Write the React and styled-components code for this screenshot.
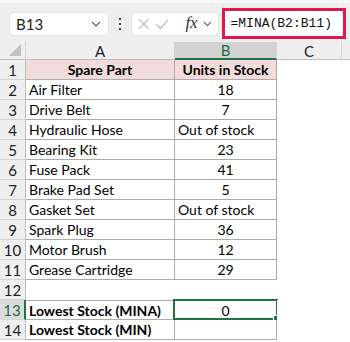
import React from 'react';
import styled, { createGlobalStyle } from 'styled-components';

const GlobalStyle = createGlobalStyle`
  body {
    margin: 0;
    background: #fff;
    font-family: "Lato", "Liberation Sans", sans-serif;
  }
`;

const rows = [
  ['Spare Part', 'Units in Stock'],
  ['Air Filter', '18'],
  ['Drive Belt', '7'],
  ['Hydraulic Hose', 'Out of stock'],
  ['Bearing Kit', '23'],
  ['Fuse Pack', '41'],
  ['Brake Pad Set', '5'],
  ['Gasket Set', 'Out of stock'],
  ['Spark Plug', '36'],
  ['Motor Brush', '12'],
  ['Grease Cartridge', '29'],
  null,
  ['Lowest Stock (MINA)', '0'],
  ['Lowest Stock (MIN)', ''],
];

function App() {
  return (
    <>
      <GlobalStyle />
      <Page>
        <Toolbar>
          <NameBox>
            <span>B13</span>
            <Chevron />
          </NameBox>
          <Dots>
            <i /><i /><i />
          </Dots>
          <FxGroup>
            <svg width="13" height="12" viewBox="0 0 13 12">
              <path d="M1 0.5 L12 11.5 M12 0.5 L1 11.5" stroke="#b3b3b3" strokeWidth="1.3" fill="none" />
            </svg>
            <svg width="14" height="11" viewBox="0 0 14 11">
              <path d="M0.5 5.5 L5 10 L13.5 0.5" stroke="#b3b3b3" strokeWidth="1.3" fill="none" />
            </svg>
            <Fx>fx</Fx>
            <Chevron />
          </FxGroup>
          <FormulaBox>=MINA(B2:B11)</FormulaBox>
        </Toolbar>

        <Sheet>
          <Corner><Triangle /></Corner>
          <ColHead>A</ColHead>
          <ColHead $active>B</ColHead>
          <ColHead>C</ColHead>
          <ColHead $last />

          {rows.map((r, i) => {
            const n = i + 1;
            const active = n === 13;
            if (!r) {
              return (
                <React.Fragment key={n}>
                  <RowHead>{n}</RowHead>
                  <Cell />
                  <Cell />
                  <Cell />
                  <Cell />
                </React.Fragment>
              );
            }
            const isNum = /^\d+$/.test(r[1]);
            const header = n === 1;
            const bold = header || n >= 13;
            return (
              <React.Fragment key={n}>
                <RowHead $active={active}>{n}</RowHead>
                <Cell $border $top={n === 13} $header={header} $bold={bold} $center={header}>
                  {r[0]}
                </Cell>
                <Cell $border $top={n === 13} $header={header} $bold={header} $center={header || isNum}>
                  {r[1]}
                  {active && (
                    <Selection>
                      <Handle />
                    </Selection>
                  )}
                </Cell>
                <Cell />
                <Cell />
              </React.Fragment>
            );
          })}
        </Sheet>
      </Page>
    </>
  );
}

function Chevron() {
  return (
    <svg width="10" height="6" viewBox="0 0 10 6">
      <path d="M1 0.8 L5 4.8 L9 0.8" stroke="#555" strokeWidth="1.2" fill="none" />
    </svg>
  );
}

export default App;

const Page = styled.div`
  width: 350px;
  height: 342px;
  overflow: hidden;
  background: #fff;
`;

const Toolbar = styled.div`
  height: 39px;
  display: flex;
  align-items: center;
  background: #efefef;
  border-top: 3px solid #f6f6f6;
  padding: 0 4px 0 9px;
  box-sizing: content-box;
`;

const NameBox = styled.div`
  width: 100px;
  height: 24px;
  box-sizing: border-box;
  margin-top: 3px;
  background: #fff;
  border: 1px solid #e3e3e3;
  border-radius: 5px;
  display: flex;
  align-items: center;
  justify-content: space-between;
  padding: 0 7px 0 6px;
  font-size: 15px;
  color: #222;
`;

const Dots = styled.div`
  width: 22px;
  margin-top: 3px;
  display: flex;
  flex-direction: column;
  align-items: center;
  gap: 3px;

  i {
    display: block;
    width: 2px;
    height: 2px;
    background: #444;
  }
`;

const FxGroup = styled.div`
  width: 88px;
  height: 24px;
  box-sizing: border-box;
  margin-top: 3px;
  background: #fff;
  border: 1px solid #e6e6e6;
  border-radius: 5px;
  display: flex;
  align-items: center;
  padding: 0 6px 0 6px;
  gap: 7px;
`;

const Fx = styled.span`
  font-family: "Liberation Serif", serif;
  font-style: italic;
  font-size: 17px;
  color: #333;
  margin-left: 10px;
  margin-right: -2px;
  margin-top: -2px;
`;

const FormulaBox = styled.div`
  margin-left: 3px;
  margin-top: 1px;
  width: 125px;
  height: 31px;
  box-sizing: border-box;
  border: 3px solid #e3174b;
  background: #fff;
  display: flex;
  align-items: center;
  padding-left: 6px;
  font-family: "Liberation Mono", monospace;
  font-size: 13px;
  color: #111;
  white-space: nowrap;
  overflow: hidden;
`;

const Sheet = styled.div`
  display: grid;
  grid-template-columns: 26px 149px 102px 65px 1fr;
  grid-template-rows: 18px repeat(14, 20px);
  font-size: 14px;
  color: #000;
`;

const Corner = styled.div`
  position: relative;
  background: #efefef;
  border-right: 1px solid #d4d4d4;
  border-bottom: 1px solid #bdbdbd;
  box-sizing: border-box;
`;

const Triangle = styled.div`
  position: absolute;
  right: 4px;
  bottom: 3px;
  width: 0;
  height: 0;
  border-left: 12px solid transparent;
  border-bottom: 12px solid #c2c2c2;
`;

const ColHead = styled.div`
  box-sizing: border-box;
  background: ${(p) => (p.$active ? '#d3d3d3' : '#efefef')};
  color: ${(p) => (p.$active ? '#1e6b41' : '#222')};
  border-right: ${(p) => (p.$last ? 'none' : '1px solid #d4d4d4')};
  border-bottom: ${(p) => (p.$active ? '2px solid #217346' : '1px solid #bdbdbd')};
  display: flex;
  align-items: center;
  justify-content: center;
  font-size: 15px;
`;

const RowHead = styled.div`
  box-sizing: border-box;
  background: ${(p) => (p.$active ? '#dcdcdc' : '#efefef')};
  color: ${(p) => (p.$active ? '#1e6b41' : '#222')};
  border-right: ${(p) => (p.$active ? '2px solid #217346' : '1px solid #bdbdbd')};
  border-bottom: 1px solid #d4d4d4;
  display: flex;
  align-items: center;
  justify-content: center;
  font-size: 15px;
`;

const Cell = styled.div`
  position: relative;
  box-sizing: border-box;
  background: ${(p) => (p.$header ? '#f2dcdb' : '#fff')};
  border-right: ${(p) => (p.$border ? '1px solid #ababab' : 'none')};
  border-bottom: ${(p) => (p.$border ? '1px solid #ababab' : 'none')};
  border-top: ${(p) => (p.$top ? '1px solid #ababab' : 'none')};
  font-weight: ${(p) => (p.$bold ? 700 : 400)};
  display: flex;
  align-items: center;
  justify-content: ${(p) => (p.$center ? 'center' : 'flex-start')};
  padding: 0 3px;
  white-space: nowrap;
`;

const Selection = styled.div`
  position: absolute;
  left: -2px;
  top: -2px;
  right: -2px;
  bottom: -1px;
  border: 2px solid #217346;
  pointer-events: none;
`;

const Handle = styled.div`
  position: absolute;
  right: -5px;
  bottom: -5px;
  width: 6px;
  height: 6px;
  background: #217346;
  border: 1px solid #fff;
`;
